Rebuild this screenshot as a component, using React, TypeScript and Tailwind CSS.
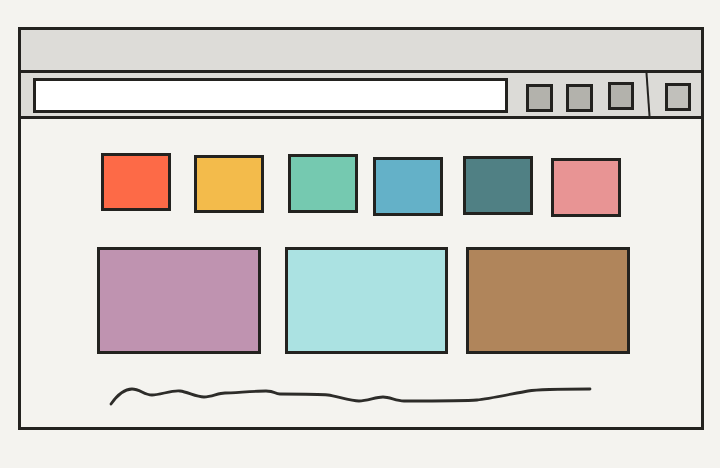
export default function App() {
  const line = "border-[#23221f]";
  return (
    <div className="w-[720px] h-[468px] bg-[#f4f3ef] pt-[27px] pl-[18px] overflow-hidden">
      <div className={`w-[686px] h-[403px] border-[3px] ${line} flex flex-col bg-[#f4f3ef]`}>
        <div className={`h-[43px] shrink-0 bg-[#dddcd8] border-b-[3px] ${line}`} />
        <div className={`h-[46px] shrink-0 bg-[#dcdbd7] border-b-[3px] ${line} flex items-start`}>
          <div className={`mt-[5px] ml-[12px] w-[475px] h-[35px] border-[3px] ${line} bg-white`} />
          <div className={`ml-[18px] mt-[11px] w-[27px] h-[28px] border-[3px] ${line} bg-[#b3b2ac]`} />
          <div className={`ml-[13px] mt-[11px] w-[27px] h-[28px] border-[3px] ${line} bg-[#b3b2ac]`} />
          <div className={`ml-[15px] mt-[9px] w-[26px] h-[28px] border-[3px] ${line} bg-[#b3b2ac]`} />
          <div className="ml-[13px] w-[2px] h-[43px] bg-[#23221f] rotate-[-4deg]" />
          <div className={`ml-[16px] mt-[10px] w-[26px] h-[28px] border-[3px] ${line} bg-[#c1c0bb]`} />
        </div>
        <div className="flex flex-col pt-[34px]">
          <div className="flex items-start h-[64px]">
            <div className={`ml-[80px] mt-[0px] w-[70px] h-[58px] border-[3px] ${line} bg-[#fd6a47]`} />
            <div className={`ml-[23px] mt-[2px] w-[70px] h-[58px] border-[3px] ${line} bg-[#f3bb4b]`} />
            <div className={`ml-[24px] mt-[1px] w-[70px] h-[59px] border-[3px] ${line} bg-[#75c9b0]`} />
            <div className={`ml-[15px] mt-[4px] w-[70px] h-[59px] border-[3px] ${line} bg-[#64b1c8]`} />
            <div className={`ml-[20px] mt-[3px] w-[70px] h-[59px] border-[3px] ${line} bg-[#508084]`} />
            <div className={`ml-[18px] mt-[5px] w-[70px] h-[59px] border-[3px] ${line} bg-[#e89494]`} />
          </div>
          <div className="flex items-start mt-[30px]">
            <div className={`ml-[76px] w-[164px] h-[107px] border-[3px] ${line} bg-[#bf93b0]`} />
            <div className={`ml-[24px] w-[163px] h-[107px] border-[3px] ${line} bg-[#abe2e2]`} />
            <div className={`ml-[18px] w-[164px] h-[107px] border-[3px] ${line} bg-[#b0855b]`} />
          </div>
          <svg className="ml-[85px] mt-[30px] block" width="490" height="24" viewBox="0 0 490 24" fill="none">
            <path
              d="M5 20 C12 10, 18 5, 26 5 S38 11, 46 11 S66 6, 74 7 S90 13, 98 13 S112 9, 119 9 S150 7, 160 7 S168 10, 174 10 S214 10, 222 11 S245 17, 253 17 S270 13, 277 13 S290 17, 298 17 S360 17, 371 16 S410 9, 422 7 S470 5, 484 5"
              stroke="#2d2c29"
              strokeWidth="2.8"
              strokeLinecap="round"
              strokeLinejoin="round"
            />
          </svg>
        </div>
      </div>
    </div>
  );
}
